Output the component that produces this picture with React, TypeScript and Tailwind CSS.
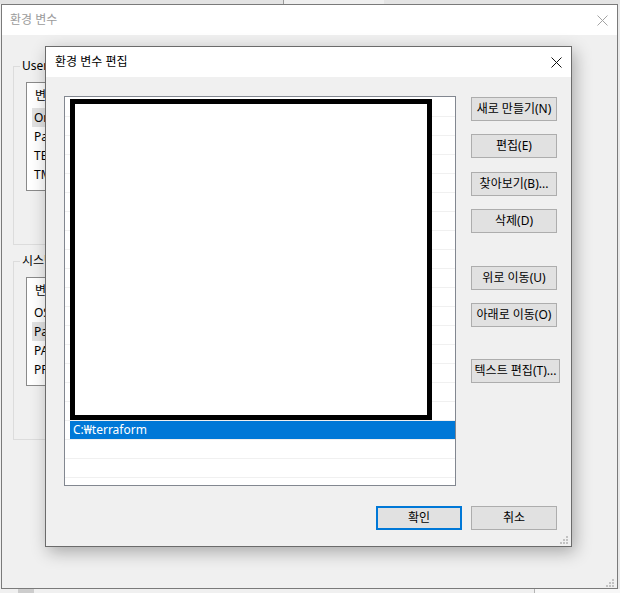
import React from "react";

const FONT = "font-['Noto_Sans','Noto_Sans_CJK_KR',sans-serif]";

function CloseIcon({ color }: { color: string }) {
  return (
    <svg width="11" height="11" viewBox="0 0 11 11" className="block">
      <path d="M0.5 0.5L10.5 10.5M10.5 0.5L0.5 10.5" stroke={color} strokeWidth="1" />
    </svg>
  );
}

function Grip() {
  return (
    <svg width="8" height="8" viewBox="0 0 8 8" className="block">
      <rect x="6" y="0" width="2" height="2" fill="#c2c2c2" />
      <rect x="3" y="3" width="2" height="2" fill="#c2c2c2" />
      <rect x="6" y="3" width="2" height="2" fill="#c2c2c2" />
      <rect x="0" y="6" width="2" height="2" fill="#c2c2c2" />
      <rect x="3" y="6" width="2" height="2" fill="#c2c2c2" />
      <rect x="6" y="6" width="2" height="2" fill="#c2c2c2" />
    </svg>
  );
}

function Btn({ label, className }: { label: string; className: string }) {
  return (
    <div
      className={`h-[24px] shrink-0 flex items-center justify-center bg-[#e1e1e1] text-[12px] leading-[16px] whitespace-nowrap ${className}`}
    >
      {label}
    </div>
  );
}

function VarList({ rows, selected }: { rows: string[]; selected: number }) {
  return (
    <div className="mt-[8px] ml-[12px] w-[520px] h-[109px] border border-[#8a8a8a] bg-white overflow-hidden">
      <div className="h-[25px] flex items-center pl-[8px] leading-[16px]">
        <span>변수</span>
      </div>
      {rows.map((r, i) => (
        <div
          key={r}
          className={`h-[19px] ml-[5px] pl-[2px] flex items-center leading-[16px] ${
            i === selected ? "bg-[#e2e2e2]" : ""
          }`}
        >
          {r}
        </div>
      ))}
    </div>
  );
}

function BackgroundWindow() {
  return (
    <div className="relative w-[617px] h-[585px] border border-[#7a7a7a] bg-[#f0f0f0] flex flex-col">
      <div className="h-[30px] bg-white flex items-center justify-between pl-[8px] pr-[9px] text-[#9b9b9b]">
        <span className="leading-[16px]">환경 변수</span>
        <CloseIcon color="#a3a3a3" />
      </div>

      <div className="pl-[11px] pt-[23px]">
        <fieldset className="w-[548px] border border-[#dcdcdc] pb-[53px]">
          <legend className="ml-[6px] px-[2px] leading-[16px]">User</legend>
          <VarList rows={["OneDrive", "Path", "TEMP", "TMP"]} selected={0} />
        </fieldset>

        <fieldset className="mt-[8px] w-[548px] border border-[#dcdcdc] pb-[53px]">
          <legend className="ml-[6px] px-[2px] leading-[16px]">시스템 변수</legend>
          <VarList rows={["OS", "Path", "PATHEXT", "PROCESSOR"]} selected={1} />
        </fieldset>
      </div>

      <div className="absolute right-[3px] bottom-[1px]">
        <Grip />
      </div>
    </div>
  );
}

const pathRows = Array.from({ length: 21 }, (_, i) => (i === 17 ? "C:₩terraform" : ""));

function EditDialog() {
  return (
    <div className="absolute left-[45px] top-[46px] w-[527px] h-[501px] border border-[#6b6b6b] bg-[#f0f0f0] flex flex-col shadow-[3px_5px_16px_rgba(0,0,0,0.3)]">
      <div className="h-[30px] shrink-0 bg-white flex items-center justify-between pl-[9px] pr-[9px]">
        <span className="leading-[16px]">환경 변수 편집</span>
        <CloseIcon color="#111111" />
      </div>

      <div className="flex flex-col pl-[18px] pt-[19px] pr-[14px]">
        <div className="flex items-start">
          <div className="relative shrink-0 w-[392px] h-[390px] border border-[#828790] bg-white overflow-hidden pt-[1px]">
            {pathRows.map((r, i) => (
              <div key={i} className="h-[19px] border-b border-[#f0f0f0] flex">
                {i === 17 ? (
                  <div className="flex-1 ml-[5px] pl-[3px] bg-[#0078d7] text-white flex items-center leading-[16px]">
                    {r}
                  </div>
                ) : null}
              </div>
            ))}
            <div className="absolute left-[5px] top-[2px] w-[362px] h-[321px] border-[5px] border-black bg-white" />
          </div>

          <div className="ml-[15px] shrink-0 flex flex-col items-start">
            <Btn label="새로 만들기(N)" className="mt-[1px] w-[86px] border border-[#adadad]" />
            <Btn label="편집(E)" className="mt-[13px] w-[86px] border border-[#adadad]" />
            <Btn label="찾아보기(B)..." className="mt-[14px] w-[86px] border border-[#adadad]" />
            <Btn label="삭제(D)" className="mt-[13px] w-[86px] border border-[#adadad]" />
            <Btn label="위로 이동(U)" className="mt-[33px] w-[86px] border border-[#adadad]" />
            <Btn label="아래로 이동(O)" className="mt-[13px] w-[86px] border border-[#adadad]" />
            <Btn label="텍스트 편집(T)..." className="mt-[32px] w-[89px] border border-[#adadad]" />
          </div>
        </div>

        <div className="mt-[20px] flex justify-end gap-[9px]">
          <Btn label="확인" className="w-[86px] border-2 border-[#0078d7]" />
          <Btn label="취소" className="w-[86px] border border-[#adadad]" />
        </div>
      </div>

      <div className="absolute right-[3px] bottom-[2px]">
        <Grip />
      </div>
    </div>
  );
}

export default function App() {
  return (
    <div className={`relative w-[620px] h-[593px] overflow-hidden bg-[#ececec] text-[12px] text-black ${FONT}`}>
      <div className="flex h-[4px] bg-[#e6e6e6]">
        <div className="w-[283px] bg-[#e3e3e3]" />
        <div className="w-px bg-[#9a9a9a]" />
        <div className="w-[100px] bg-[#efefef]" />
        <div className="flex-1 bg-[#e4e4e4]" />
      </div>

      <div className="flex">
        <div className="w-px bg-[#f0f0f0]" />
        <BackgroundWindow />
        <div className="flex-1 bg-[#e9e9e9]" />
      </div>

      <div className="flex h-[4px] bg-[#f4f4f4]">
        <div className="w-[18px] bg-[#f0f0f0]" />
        <div className="w-[16px] bg-[#cdcdcd]" />
        <div className="w-[500px] bg-[#f0f0f0]" />
        <div className="w-px bg-[#b4b4b4]" />
        <div className="flex-1 bg-[#f7f7f7]" />
      </div>

      <EditDialog />
    </div>
  );
}
